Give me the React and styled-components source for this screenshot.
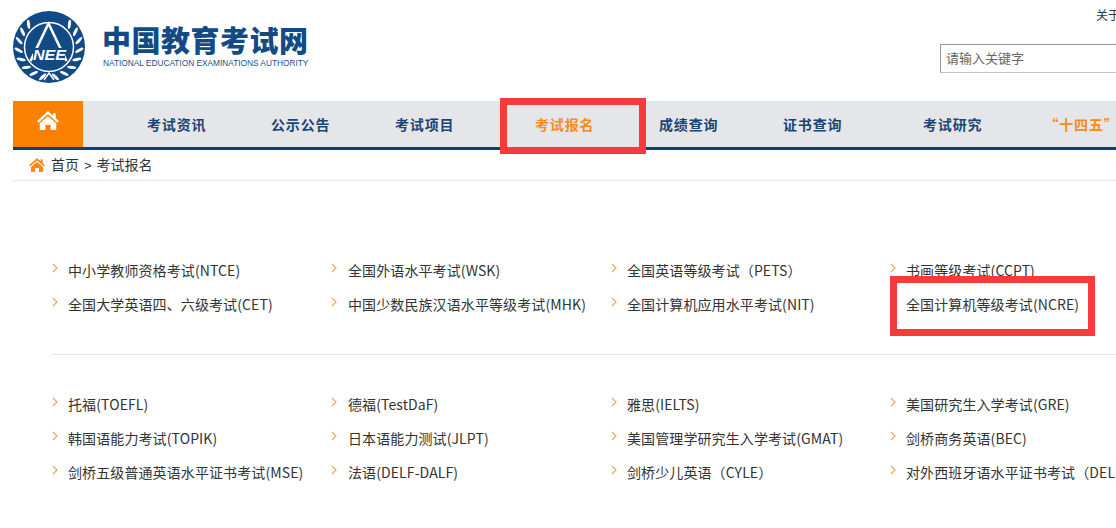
import React from "react";
import styled, { createGlobalStyle } from "styled-components";

const Global = createGlobalStyle`
  html, body { margin: 0; padding: 0; width: 1116px; height: 528px; overflow: hidden; background: #fff; }
  body { font-family: "Noto Sans CJK SC", "Liberation Sans", sans-serif; color: #333; }
`;
const Page = styled.div`width: 1240px; padding-left: 13px;`;
const Header = styled.header`display: flex; height: 101px; position: relative;`;
const Logo = styled.svg`width: 72px; height: 72px; margin-top: 11px; flex: none;`;
const Brand = styled.div`margin: 21px 0 0 17px; display: flex; flex-direction: column; width: 215px;`;
const Title = styled.div`font-size: 29px; line-height: 36px; font-weight: 900; color: #124a86; letter-spacing: .5px; white-space: nowrap;`;
const Subtitle = styled.div`font: 8.3px/10px "Liberation Sans", sans-serif; color: #1d4f88; margin: 1px 0 0 1px; white-space: nowrap;`;
const Tools = styled.div`margin-left: 623px; display: flex; flex-direction: column; width: 220px;`;
const TopLink = styled.a`margin: 7px 0 0 156px; font-size: 12px; line-height: 16px; color: #333; white-space: nowrap;`;
const Search = styled.div`margin-top: 21px; width: 218px; height: 27px; border: 1px solid #c4c4c4; border-top-color: #999; border-left-color: #999; padding-left: 5px; font-size: 13px; line-height: 26px; color: #666;`;
const Nav = styled.nav`display: flex; align-items: center; height: 46px; background: #e4e6ea; border-bottom: 3px solid #0b3f7c;`;
const HomeTab = styled.a`width: 70px; height: 46px; background: #fb8000; display: flex; justify-content: center; padding-top: 10px; box-sizing: border-box; flex: none;`;
const NavItem = styled.a`
  position: relative; flex: none; margin-left: ${p => p.$gap}px; font-size: 14px; font-weight: 700; letter-spacing: .85px;
  line-height: 46px; white-space: nowrap; color: ${p => (p.$hot ? "#f98a1c" : "#1b4473")};
  ${p => p.$boxed && `&::after { content: ""; position: absolute; left: -35px; top: -3px; width: 132px; height: 42px; border: 7px solid #f73a3a; }`}
`;
const Crumbs = styled.div`display: flex; align-items: center; height: 30px; border-bottom: 1px solid #e5e5e5; padding-left: 16px; font-size: 14px; color: #333;`;
const CrumbText = styled.span`margin-left: 6px; white-space: nowrap; line-height: 28px;`;
const CrumbSep = styled.span`margin: 0 5px; font-family: "Liberation Sans", sans-serif; font-size: 13px;`;
const Group = styled.ul`
  list-style: none; margin: 0 0 0 39px; padding: ${p => p.$top}px 0 ${p => p.$bottom}px; display: grid;
  grid-template-columns: 280px 279px 279px 300px; grid-auto-rows: 34px; border-bottom: ${p => (p.$rule ? "1px solid #e3e3e3" : "none")};
`;
const Item = styled.li`display: flex; align-items: center; position: relative; font-size: 14px; letter-spacing: .1px; color: #333; white-space: nowrap;
  ${p => p.$boxed && `&::after { content: ""; position: absolute; left: 0; top: -11px; width: 191px; height: 46px; border: 7px solid #f73a3a; }`}
`;
const Chevron = styled.svg`width: 6px; height: 10px; margin-right: 10px; flex: none; position: relative; top: -2px; left: ${p => p.$nudge || 0}px;`;

const HomeIcon = ({ size, color }) => (
  <svg width={size} height={size * 0.88} viewBox="0 0 24 21" aria-hidden="true">
    <path fill={color} d="M12 0 L17.5 5 V2 H20.5 V7.8 L24 11 L22.4 12.8 L12 3.6 L1.6 12.8 L0 11 Z" />
    <path fill={color} d="M12 5.6 L21 13.4 V21 H14.8 V15 H9.2 V21 H3 V13.4 Z" />
  </svg>
);

const leafAngles = [12, 30, 48, 66, 84, 102, 120, 138];

const Emblem = () => (
  <Logo viewBox="0 0 72 72" aria-label="NEEA">
    <circle cx="36" cy="36" r="36" fill="#124a86" />
    {[-1, 1].flatMap(s =>
      leafAngles.map(a => {
        const t = (a * Math.PI) / 180;
        const x = 36 + s * 30.5 * Math.sin(t);
        const y = 36 + 30.5 * Math.cos(t);
        return <ellipse key={`${s}${a}`} cx={x} cy={y} rx="4.6" ry="1.5" fill="#fff" transform={`rotate(${s * (-a + 55)} ${x} ${y})`} />;
      })
    )}
    <circle cx="36" cy="36" r="24.5" fill="#124a86" stroke="#fff" strokeWidth="1.5" />
    <path d="M35.5 12.5 L17.5 50 M35.5 12.5 L53.5 50" stroke="#fff" strokeWidth="2.6" fill="none" />
    <rect x="20" y="37" width="32" height="12" fill="#124a86" />
    <text x="36.5" y="48.5" textAnchor="middle" fontStyle="italic" fontWeight="700" fill="#fff" fontFamily="Liberation Sans" fontSize="15.5" textLength="33" lengthAdjust="spacingAndGlyphs">NEE</text>
    <path d="M31 69 L36 62 L41 69" stroke="#fff" strokeWidth="1.4" fill="none" />
  </Logo>
);

const nav = [
  ["考试资讯", 64], ["公示公告", 64.6], ["考试项目", 64.6], ["考试报名", 80.6, true, true],
  ["成绩查询", 64.6], ["证书查询", 64.6], ["考试研究", 80.6], ["“十四五”", 62, true],
];
const first = ["中小学教师资格考试(NTCE)", "全国外语水平考试(WSK)", "全国英语等级考试（PETS）", "书画等级考试(CCPT)",
  "全国大学英语四、六级考试(CET)", "中国少数民族汉语水平等级考试(MHK)", "全国计算机应用水平考试(NIT)", "全国计算机等级考试(NCRE)"];
const second = ["托福(TOEFL)", "德福(TestDaF)", "雅思(IELTS)", "美国研究生入学考试(GRE)",
  "韩国语能力考试(TOPIK)", "日本语能力测试(JLPT)", "美国管理学研究生入学考试(GMAT)", "剑桥商务英语(BEC)",
  "剑桥五级普通英语水平证书考试(MSE)", "法语(DELF-DALF)", "剑桥少儿英语（CYLE）", "对外西班牙语水平证书考试（DELE）"];

const Entry = ({ text, column }) => (
  <Item $boxed={text.includes("NCRE")}>
    <Chevron $nudge={column === 1 ? -1 : 0} viewBox="0 0 6 10"><path d="M1 1 L5 5 L1 9" stroke="#e8a860" strokeWidth="1.2" fill="none" /></Chevron>
    {text}
  </Item>
);

export default function App() {
  return (
    <Page>
      <Global />
      <Header>
        <Emblem />
        <Brand>
          <Title>中国教育考试网</Title>
          <Subtitle>NATIONAL EDUCATION EXAMINATIONS AUTHORITY</Subtitle>
        </Brand>
        <Tools>
          <TopLink>关于我们</TopLink>
          <Search>请输入关键字</Search>
        </Tools>
      </Header>
      <Nav>
        <HomeTab><HomeIcon size={22} color="#fff" /></HomeTab>
        {nav.map(([t, g, hot, boxed]) => (
          <NavItem key={t} $gap={g} $hot={hot} $boxed={boxed}>{t}</NavItem>
        ))}
      </Nav>
      <Crumbs>
        <HomeIcon size={16} color="#fb8a16" />
        <CrumbText>首页<CrumbSep>&gt;</CrumbSep>考试报名</CrumbText>
      </Crumbs>
      <Group $top={72} $bottom={33} $rule>
        {first.map((t, i) => <Entry key={t} text={t} column={i % 4} />)}
      </Group>
      <Group $top={32} $bottom={0}>
        {second.map((t, i) => <Entry key={t} text={t} column={i % 4} />)}
      </Group>
    </Page>
  );
}
